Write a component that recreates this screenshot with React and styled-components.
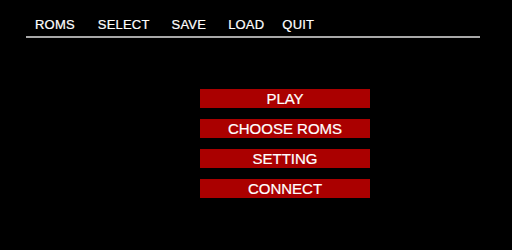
import React from "react";
import styled, { createGlobalStyle } from "styled-components";

const Global = createGlobalStyle`
  html, body { margin: 0; padding: 0; background: #000; }
  body { font-family: "Liberation Sans", Arial, sans-serif; color: #fff; }
`;

const Page = styled.div`
  width: 512px;
  height: 250px;
  background: #000;
  overflow: hidden;
`;

const MenuBar = styled.nav`
  display: flex;
  align-items: center;
  margin-left: 26px;
  width: 454px;
  padding-top: 17px;
  padding-bottom: 4px;
  border-bottom: 2px solid #a8a8a8;
`;

const MenuItem = styled.span`
  font-size: 13px;
  line-height: 15px;
  color: #fff;
  letter-spacing: 0.2px;
  -webkit-text-stroke: 0.2px #fff;
  margin-left: ${(p) => p.$left}px;
`;

const Buttons = styled.div`
  display: flex;
  flex-direction: column;
  gap: 11px;
  margin-left: 200px;
  margin-top: 51px;
  width: 170px;
`;

const MenuButton = styled.div`
  height: 19px;
  background: #aa0000;
  color: #fff;
  font-size: 15px;
  line-height: 19px;
  text-align: center;
  -webkit-text-stroke: 0.2px #fff;
`;

const menu = [
  ["ROMS", 9],
  ["SELECT", 23],
  ["SAVE", 22],
  ["LOAD", 22],
  ["QUIT", 18],
];

const buttons = ["PLAY", "CHOOSE ROMS", "SETTING", "CONNECT"];

export default function App() {
  return (
    <Page>
      <Global />
      <MenuBar>
        {menu.map(([t, l]) => (
          <MenuItem key={t} $left={l}>
            {t}
          </MenuItem>
        ))}
      </MenuBar>
      <Buttons>
        {buttons.map((b) => (
          <MenuButton key={b}>{b}</MenuButton>
        ))}
      </Buttons>
    </Page>
  );
}
